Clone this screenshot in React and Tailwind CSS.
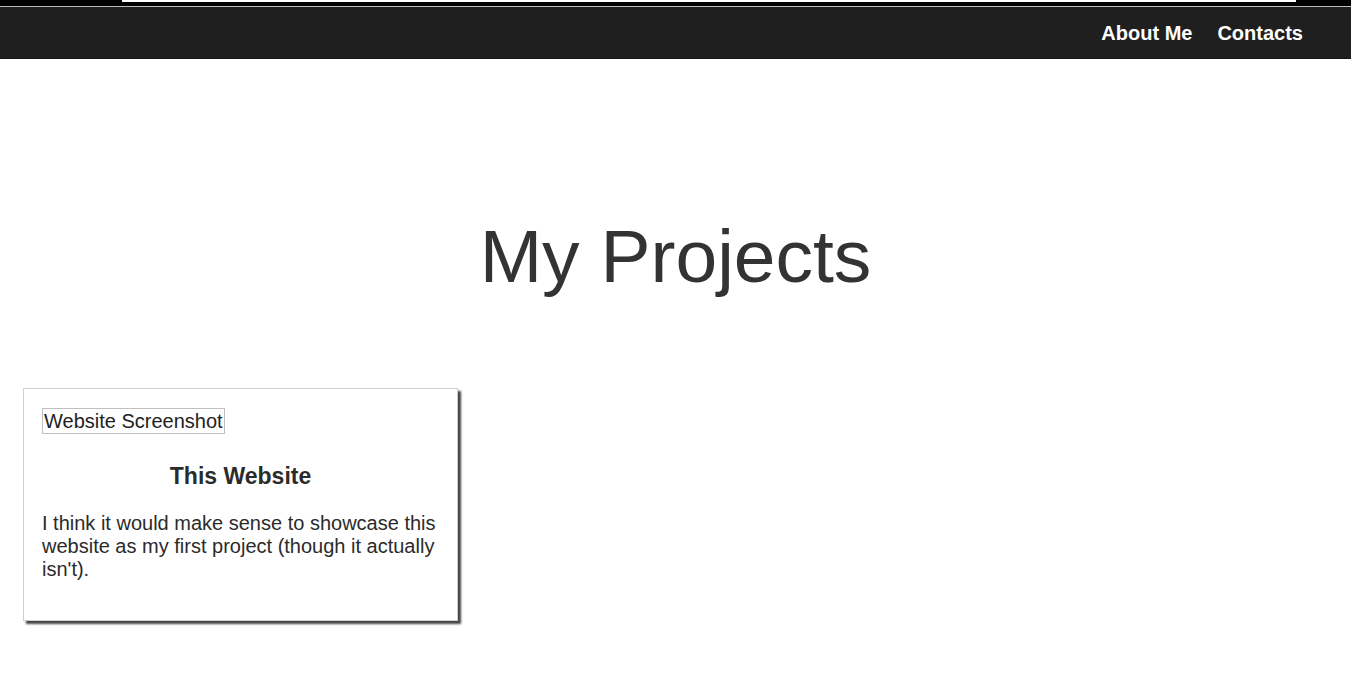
import React from "react";

const App = () => {
  return (
    <div className="min-h-screen bg-white text-[#333] font-['Liberation_Sans',Arial,sans-serif]">
      {/* Top bar */}
      <header className="bg-[#1f1f1f] border-b border-[#151515]">
        <div className="h-[6px] bg-black flex">
          <div className="ml-[122px] w-[1174px] h-[2px] bg-white" />
        </div>
        <div className="h-px bg-[#bdbdbd]" />
        <nav className="h-[51px] flex items-center justify-end pr-[48px] gap-[25px] text-[20px] font-bold text-white">
          <a href="#about" className="leading-none">About Me</a>
          <a href="#contacts" className="leading-none">Contacts</a>
        </nav>
      </header>

      {/* Title */}
      <h1 className="mt-[154px] text-center text-[75px] leading-[86px] text-[#333]">
        My Projects
      </h1>

      {/* Projects */}
      <div className="mt-[89px] px-[23px] flex">
        <div className="w-[435px] border border-[#d0d0d0] bg-white shadow-[3px_3px_2px_#444] px-[18px] pt-[19px] pb-[19px]">
          <span className="inline-block border border-[#c0c0c0] px-[1px] text-[20px] leading-[24px] text-[#222]">
            Website Screenshot
          </span>
          <h3 className="mt-[28px] text-center text-[23px] font-bold leading-[26px] text-[#2b2b2b]">
            This Website
          </h3>
          <p className="mt-[23px] mb-[20px] text-[20px] leading-[23px] text-[#2b2b2b]">
            I think it would make sense to showcase this website as my first project (though it actually isn't).
          </p>
        </div>
      </div>
    </div>
  );
};

export default App;
